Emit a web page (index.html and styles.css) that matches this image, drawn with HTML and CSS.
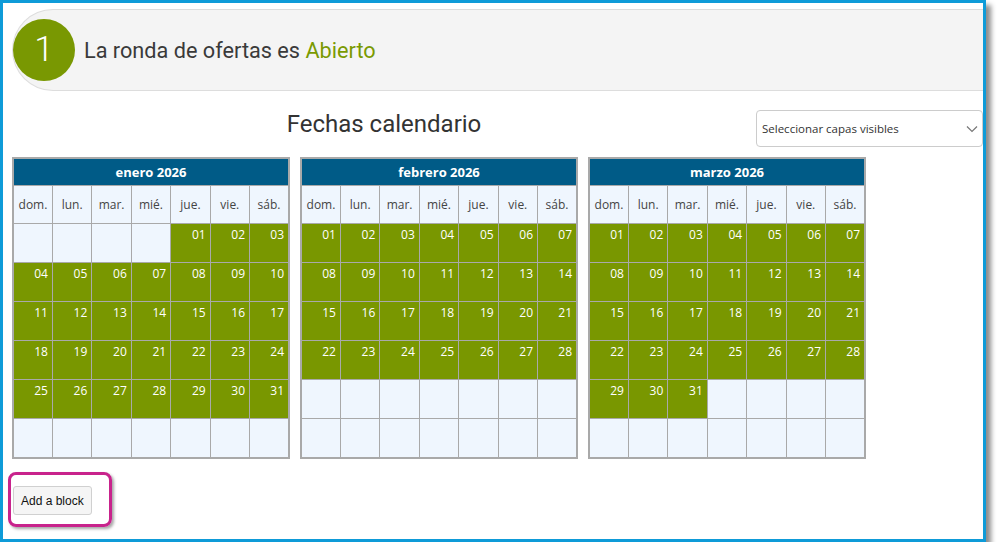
FILE: index.html
```html
<!DOCTYPE html>
<html lang="es">
<head>
    <meta charset="UTF-8">
    <meta name="viewport" content="width=device-width, initial-scale=1.0">
    <title>Fechas calendario</title>
    <link rel="stylesheet" href="styles.css">
</head>
<body>
    <div class="frame">
        <div class="round-header">
            <span class="step">1</span>
            <h2 class="round-title">La ronda de ofertas es <span class="status">Abierto</span></h2>
        </div>

        <div class="toolbar">
            <h1 class="page-title">Fechas calendario</h1>
            <div class="layer-select">
                <span>Seleccionar capas visibles</span>
                <svg class="chevron" width="12" height="8" viewBox="0 0 12 8">
                    <path d="M1 1.5 L6 6.5 L11 1.5" fill="none" stroke="#777" stroke-width="1.2"/>
                </svg>
            </div>
        </div>

        <div class="calendars" id="calendars"></div>

        <div class="actions">
            <div class="highlight">
                <button class="btn">Add a block</button>
            </div>
        </div>
    </div>

    <script>
        // month data: first weekday (0 = domingo) and number of days
        const months = [
            { name: "enero 2026", start: 4, days: 31 },
            { name: "febrero 2026", start: 0, days: 28 },
            { name: "marzo 2026", start: 0, days: 31 }
        ];
        const dayNames = ["dom.", "lun.", "mar.", "mié.", "jue.", "vie.", "sáb."];

        const wrap = document.getElementById("calendars");

        months.forEach((m) => {
            let html = '<table class="month"><thead>';
            html += '<tr><th class="month-name" colspan="7">' + m.name + '</th></tr>';
            html += '<tr class="day-names">';
            dayNames.forEach((d) => { html += '<th>' + d + '</th>'; });
            html += '</tr></thead><tbody>';

            for (let row = 0; row < 6; row++) {
                html += '<tr>';
                for (let col = 0; col < 7; col++) {
                    const day = row * 7 + col - m.start + 1;
                    if (day >= 1 && day <= m.days) {
                        html += '<td class="open">' + String(day).padStart(2, "0") + '</td>';
                    } else {
                        html += '<td></td>';
                    }
                }
                html += '</tr>';
            }
            html += '</tbody></table>';
            wrap.insertAdjacentHTML("beforeend", html);
        });
    </script>
</body>
</html>
```

FILE: styles.css
```css
body {
    margin: 0;
    padding: 0;
    background: #fff;
    font-family: Roboto, Arial, sans-serif;
    color: #333;
}

.frame {
    width: 986px;
    height: 542px;
    box-sizing: border-box;
    border: 3px solid #0e9bd8;
    background: #fff;
    box-shadow: 5px 5px 5px rgba(0, 0, 0, 0.45);
    overflow: hidden;
}

/* round status header */
.round-header {
    display: flex;
    align-items: center;
    gap: 9px;
    height: 82px;
    box-sizing: border-box;
    margin: 6px 0 0 9px;
    border: 1px solid #ddd;
    border-right: 0;
    border-radius: 41px 0 0 41px;
    background: #f4f4f4;
}

.step {
    width: 62px;
    height: 62px;
    border-radius: 50%;
    background: #799802;
    color: #fff;
    font-size: 35px;
    font-weight: 300;
    line-height: 62px;
    text-align: center;
}

.round-title {
    margin: 0;
    font-size: 21.7px;
    font-weight: 400;
    color: #3a3a3a;
}

.status {
    color: #7a9a01;
}

/* title + layer selector */
.toolbar {
    display: flex;
    align-items: flex-start;
    height: 37px;
    margin-top: 19px;
    padding-left: 9px;
}

.page-title {
    flex: 1;
    margin: 0;
    font-size: 24px;
    font-weight: 400;
    line-height: 28px;
    text-align: center;
    color: #333;
}

.layer-select {
    display: flex;
    align-items: center;
    justify-content: space-between;
    width: 227px;
    height: 37px;
    box-sizing: border-box;
    padding: 0 4px 0 5px;
    border: 1px solid #ccc;
    border-radius: 4px;
    background: #fff;
    font-family: "Open Sans", sans-serif;
    font-size: 11.5px;
    color: #333;
}

/* calendars */
.calendars {
    display: flex;
    gap: 10px;
    margin-top: 10px;
    padding-left: 9px;
}

.month {
    width: 278px;
    border-collapse: collapse;
    table-layout: fixed;
    border: 2px solid #a9a9a9;
    font-family: "Open Sans", sans-serif;
    font-size: 12px;
}

.month th,
.month td {
    border: 1px solid #a9a9a9;
    padding: 0;
}

.month-name {
    height: 26px;
    background: #005b87;
    color: #fff;
    font-size: 13px;
    font-weight: 700;
}

.day-names th {
    height: 37px;
    background: #eff6fe;
    color: #444;
    font-weight: 400;
}

.month td {
    height: 36px;
    padding: 2px 4px 0 0;
    background: #eff6fe;
    vertical-align: top;
    text-align: right;
    color: #fff;
}

.month td.open {
    background: #799700;
}

/* action button */
.actions {
    margin-top: 13px;
    padding-left: 9px;
}

.highlight {
    display: inline-block;
    margin-left: -4px;
    padding: 11px 17px 9px 2px;
    border: 3px solid #c8238c;
    border-radius: 8px;
    box-shadow: 2px 2px 3px rgba(0, 0, 0, 0.35);
}

.btn {
    display: block;
    height: 29px;
    padding: 0 7px;
    border: 1px solid #d0d0d0;
    border-radius: 3px;
    background: #f5f5f5;
    font-family: "Liberation Sans", Arial, sans-serif;
    font-size: 12px;
    color: #111;
}
```
